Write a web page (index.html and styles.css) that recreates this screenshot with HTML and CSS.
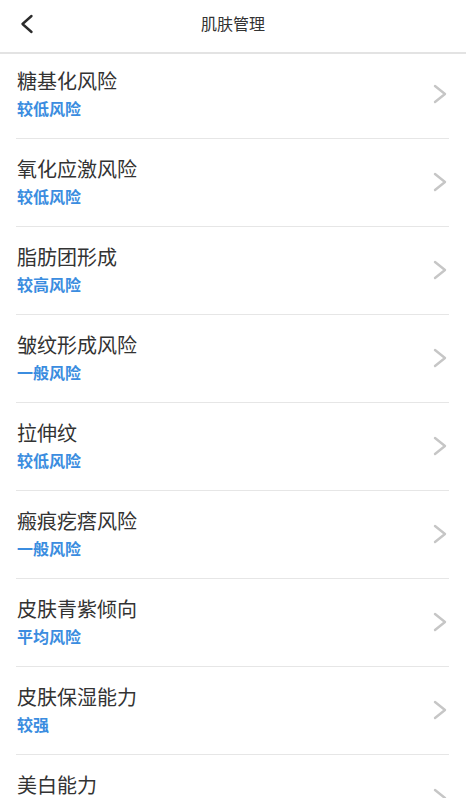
FILE: index.html
```html
<!DOCTYPE html>
<html lang="zh">
<head>
<meta charset="utf-8">
<title>肌肤管理</title>
<link rel="stylesheet" href="styles.css">
</head>
<body>
<header class="topbar">
  <span class="back">
    <svg width="14" height="20" viewBox="0 0 14 20"><polyline points="11.5,2 2.5,10 11.5,18" fill="none" stroke="#2b2b2b" stroke-width="2.4" stroke-linecap="round" stroke-linejoin="round"/></svg>
  </span>
  <h1 class="title">肌肤管理</h1>
</header>
<ul class="list">
  <li class="item"><div class="text"><div class="name">糖基化风险</div><div class="level">较低风险</div></div><svg class="arrow" width="14" height="20" viewBox="0 0 14 20"><polyline points="2,2 12,10 2,18" fill="none" stroke="#c6c6c6" stroke-width="2.4" stroke-linecap="round" stroke-linejoin="round"/></svg></li>
  <li class="item"><div class="text"><div class="name">氧化应激风险</div><div class="level">较低风险</div></div><svg class="arrow" width="14" height="20" viewBox="0 0 14 20"><polyline points="2,2 12,10 2,18" fill="none" stroke="#c6c6c6" stroke-width="2.4" stroke-linecap="round" stroke-linejoin="round"/></svg></li>
  <li class="item"><div class="text"><div class="name">脂肪团形成</div><div class="level">较高风险</div></div><svg class="arrow" width="14" height="20" viewBox="0 0 14 20"><polyline points="2,2 12,10 2,18" fill="none" stroke="#c6c6c6" stroke-width="2.4" stroke-linecap="round" stroke-linejoin="round"/></svg></li>
  <li class="item"><div class="text"><div class="name">皱纹形成风险</div><div class="level">一般风险</div></div><svg class="arrow" width="14" height="20" viewBox="0 0 14 20"><polyline points="2,2 12,10 2,18" fill="none" stroke="#c6c6c6" stroke-width="2.4" stroke-linecap="round" stroke-linejoin="round"/></svg></li>
  <li class="item"><div class="text"><div class="name">拉伸纹</div><div class="level">较低风险</div></div><svg class="arrow" width="14" height="20" viewBox="0 0 14 20"><polyline points="2,2 12,10 2,18" fill="none" stroke="#c6c6c6" stroke-width="2.4" stroke-linecap="round" stroke-linejoin="round"/></svg></li>
  <li class="item"><div class="text"><div class="name">瘢痕疙瘩风险</div><div class="level">一般风险</div></div><svg class="arrow" width="14" height="20" viewBox="0 0 14 20"><polyline points="2,2 12,10 2,18" fill="none" stroke="#c6c6c6" stroke-width="2.4" stroke-linecap="round" stroke-linejoin="round"/></svg></li>
  <li class="item"><div class="text"><div class="name">皮肤青紫倾向</div><div class="level">平均风险</div></div><svg class="arrow" width="14" height="20" viewBox="0 0 14 20"><polyline points="2,2 12,10 2,18" fill="none" stroke="#c6c6c6" stroke-width="2.4" stroke-linecap="round" stroke-linejoin="round"/></svg></li>
  <li class="item"><div class="text"><div class="name">皮肤保湿能力</div><div class="level">较强</div></div><svg class="arrow" width="14" height="20" viewBox="0 0 14 20"><polyline points="2,2 12,10 2,18" fill="none" stroke="#c6c6c6" stroke-width="2.4" stroke-linecap="round" stroke-linejoin="round"/></svg></li>
  <li class="item"><div class="text"><div class="name">美白能力</div><div class="level">较强</div></div><svg class="arrow" width="14" height="20" viewBox="0 0 14 20"><polyline points="2,2 12,10 2,18" fill="none" stroke="#c6c6c6" stroke-width="2.4" stroke-linecap="round" stroke-linejoin="round"/></svg></li>
</ul>
</body>
</html>
```
FILE: styles.css
```css
html, body {
  margin: 0;
  padding: 0;
  background: #ffffff;
  font-family: "Noto Sans CJK SC", "Noto Sans", sans-serif;
  overflow: hidden;
}
.topbar {
  height: 52px;
  border-bottom: 2px solid #e3e3e3;
  display: flex;
  align-items: center;
  justify-content: center;
  position: relative;
}
.back {
  position: absolute;
  left: 20px;
  top: 14px;
  display: flex;
}
.title {
  margin: 0;
  font-size: 16px;
  font-weight: 400;
  color: #333333;
  line-height: 20px;
  padding-bottom: 7px;
}
.list {
  list-style: none;
  margin: 0;
  padding: 0;
}
.item {
  margin: 0 17px 0 16px;
  padding: 16px 2px 19px 1px;
  border-bottom: 1px solid #e6e6e6;
  display: flex;
  align-items: center;
  justify-content: space-between;
}
.item:first-child {
  padding-top: 13px;
}
.text {
  display: flex;
  flex-direction: column;
}
.name {
  font-size: 20px;
  line-height: 28px;
  color: #333333;
}
.level {
  margin-top: 2px;
  font-size: 16px;
  line-height: 22px;
  font-weight: 600;
  color: #3b8de0;
}
.arrow {
  display: block;
  margin-top: 1px;
}
```
